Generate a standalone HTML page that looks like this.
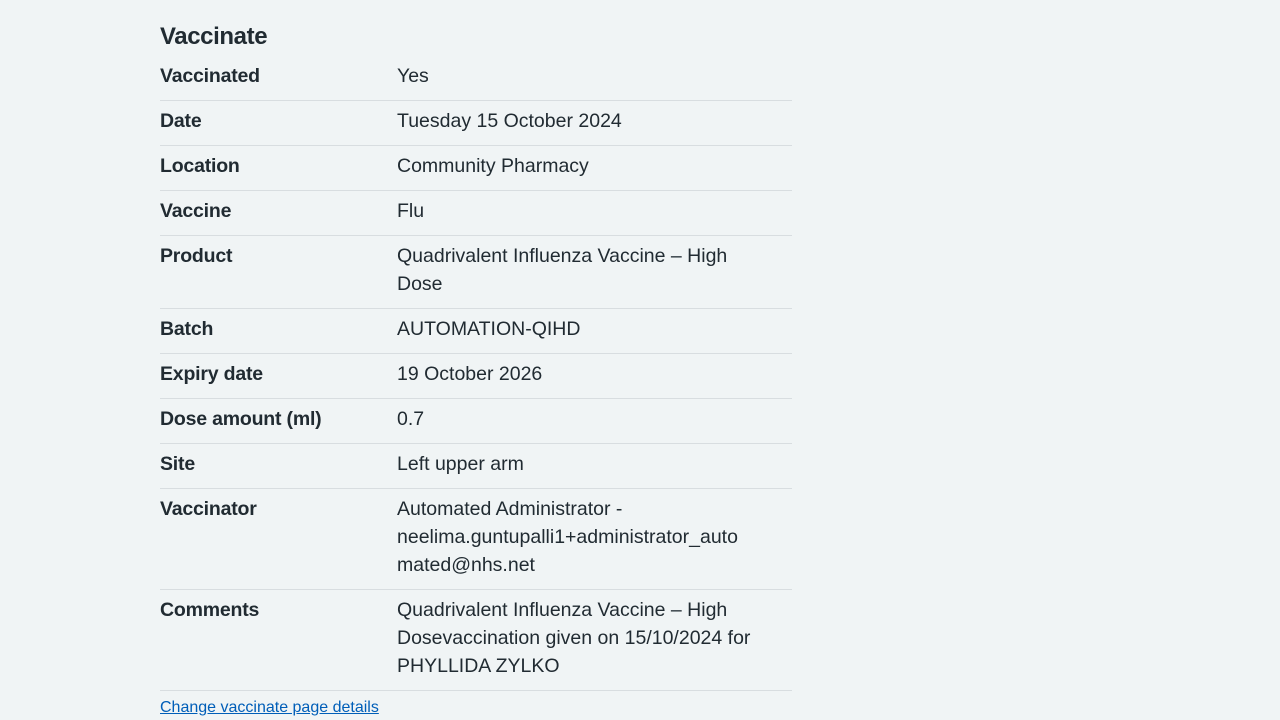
<!DOCTYPE html>
<html><head><meta charset="utf-8">
<style>
html,body{margin:0;padding:0;background:#f0f4f5;}
body{width:1280px;height:720px;overflow:hidden;font-family:"Liberation Sans",Arial,sans-serif;color:#212b32;}
.wrap{position:absolute;left:160px;top:0;width:632px;}
h2{margin:0;position:absolute;top:21px;left:0;font-size:24px;line-height:32px;font-weight:bold;letter-spacing:-0.4px;}
.list{position:absolute;top:56px;left:0;width:632px;}
.row{display:flex;border-bottom:1px solid #d8dde0;padding:6px 0 10px 0;font-size:19.5px;line-height:28px;height:28px;}
.row.l2{height:56px;}
.row.l3{height:84px;}
.row .k{width:237px;font-weight:bold;letter-spacing:-0.2px;}
.row .v{flex:1;white-space:nowrap;}
a{position:absolute;left:160px;top:698px;font-family:"Liberation Sans",Arial,sans-serif;font-size:16px;line-height:20px;color:#005eb8;text-decoration:underline;}
</style></head><body>
<div class="wrap">
<h2>Vaccinate</h2>
<div class="list">
<div class="row"><div class="k">Vaccinated</div><div class="v">Yes</div></div>
<div class="row"><div class="k">Date</div><div class="v">Tuesday 15 October 2024</div></div>
<div class="row"><div class="k">Location</div><div class="v">Community Pharmacy</div></div>
<div class="row"><div class="k">Vaccine</div><div class="v">Flu</div></div>
<div class="row l2"><div class="k">Product</div><div class="v">Quadrivalent Influenza Vaccine – High<br>Dose</div></div>
<div class="row"><div class="k">Batch</div><div class="v">AUTOMATION-QIHD</div></div>
<div class="row"><div class="k">Expiry date</div><div class="v">19 October 2026</div></div>
<div class="row"><div class="k">Dose amount (ml)</div><div class="v">0.7</div></div>
<div class="row"><div class="k">Site</div><div class="v">Left upper arm</div></div>
<div class="row l3"><div class="k">Vaccinator</div><div class="v">Automated Administrator -<br>neelima.guntupalli1+administrator_auto<br>mated@nhs.net</div></div>
<div class="row l3"><div class="k">Comments</div><div class="v">Quadrivalent Influenza Vaccine – High<br>Dosevaccination given on 15/10/2024 for<br>PHYLLIDA ZYLKO</div></div>
</div>
</div>
<a href="#">Change vaccinate page details</a>
</body></html>
